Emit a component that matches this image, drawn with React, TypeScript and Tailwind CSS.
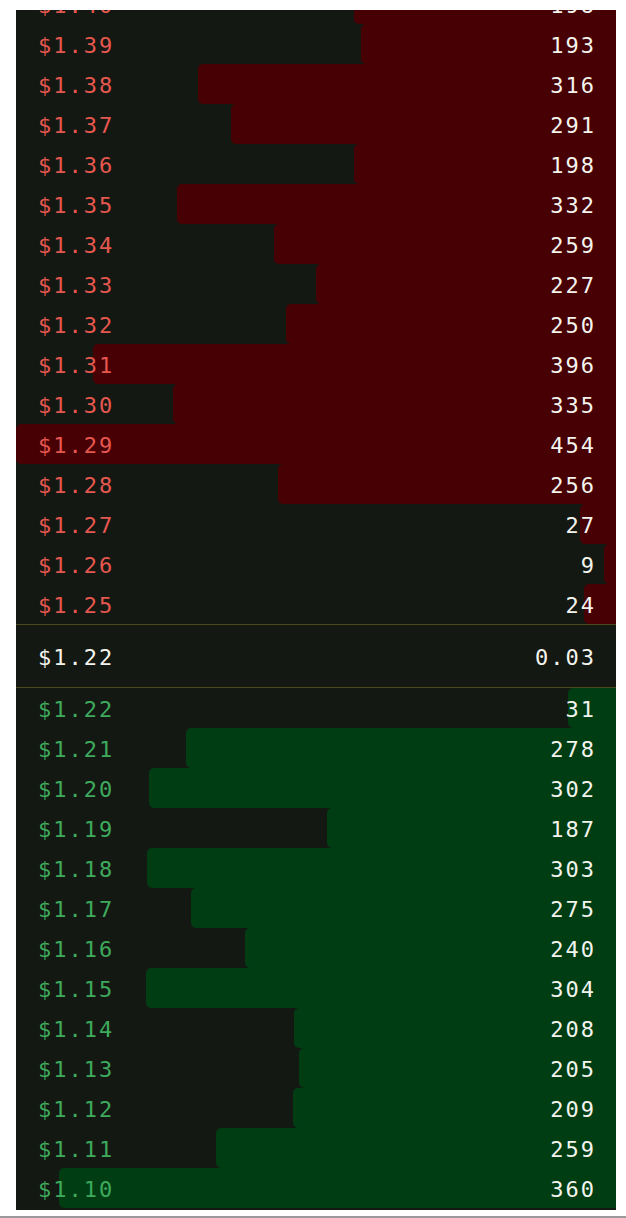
import React from "react";

const asks: [string, number][] = [
  ["1.40", 198],
  ["1.39", 193],
  ["1.38", 316],
  ["1.37", 291],
  ["1.36", 198],
  ["1.35", 332],
  ["1.34", 259],
  ["1.33", 227],
  ["1.32", 250],
  ["1.31", 396],
  ["1.30", 335],
  ["1.29", 454],
  ["1.28", 256],
  ["1.27", 27],
  ["1.26", 9],
  ["1.25", 24],
];

const bids: [string, number][] = [
  ["1.22", 31],
  ["1.21", 278],
  ["1.20", 302],
  ["1.19", 187],
  ["1.18", 303],
  ["1.17", 275],
  ["1.16", 240],
  ["1.15", 304],
  ["1.14", 208],
  ["1.13", 205],
  ["1.12", 209],
  ["1.11", 259],
  ["1.10", 360],
];

const font = { fontFamily: '"DejaVu Sans Mono", "Liberation Mono", monospace' };

function Row({ price, size, max, side }: { price: string; size: number; max: number; side: "ask" | "bid" }) {
  const pct = Math.min(100, (size / max) * 100);
  return (
    <div className="relative flex h-[40px] items-center justify-between pl-[22px] pr-[20px] pt-[2px]">
      <div
        className={
          side === "ask"
            ? "absolute right-0 top-0 bottom-0 rounded-l-[5px] bg-[#470003]"
            : "absolute right-0 top-0 bottom-0 rounded-l-[5px] bg-[#003d12]"
        }
        style={{ width: `${pct}%` }}
      />
      <span
        className={
          side === "ask"
            ? "relative text-[22px] tracking-[2px] text-[#e5574f]"
            : "relative text-[22px] tracking-[2px] text-[#3daa5c]"
        }
      >
        ${price}
      </span>
      <span className="relative text-[22px] tracking-[2px] text-[#f4f4ee]">{size}</span>
    </div>
  );
}

export default function App() {
  return (
    <div className="w-[626px] h-[1218px] bg-white flex flex-col" style={font}>
      <div className="ml-[16px] mt-[10px] w-[600px] h-[1200px] overflow-hidden bg-[#141812]">
        <div className="-mt-[26px]">
          {asks.map(([p, s]) => (
            <Row key={"a" + p} price={p} size={s} max={454} side="ask" />
          ))}
          <div className="flex h-[64px] items-center justify-between border-y border-[#4a4a1c] pl-[22px] pr-[20px] pt-[2px]">
            <span className="text-[22px] tracking-[2px] text-[#f4f4ee]">$1.22</span>
            <span className="text-[22px] tracking-[2px] text-[#f4f4ee]">0.03</span>
          </div>
          {bids.map(([p, s]) => (
            <Row key={"b" + p} price={p} size={s} max={388} side="bid" />
          ))}
        </div>
      </div>
      <div className="mt-[6px] h-[2px] w-full bg-[#9a9a9a]" />
    </div>
  );
}
